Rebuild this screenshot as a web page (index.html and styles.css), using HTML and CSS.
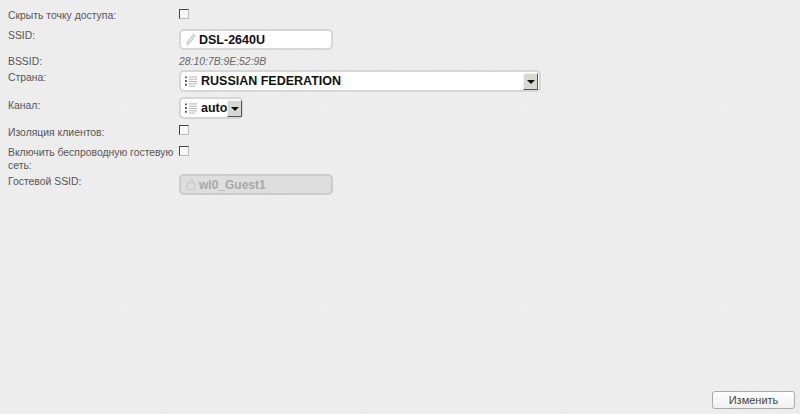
FILE: index.html
```html
<!DOCTYPE html>
<html lang="ru">
<head>
    <meta charset="UTF-8">
    <title>Wi-Fi</title>
    <link rel="stylesheet" href="styles.css">
</head>
<body>
    <form class="page">
        <div class="rows">
            <div class="row row-hide">
                <label class="row-label">Скрыть точку доступа:</label>
                <span class="check"></span>
            </div>
            <div class="row row-ssid">
                <label class="row-label">SSID:</label>
                <div class="field field-ssid">
                    <svg class="icon icon-small" viewBox="0 0 12 14"><path d="M8.500 1.500l2 1.500-6 8-3 1.500.6-3z" fill="#e4e4e4" stroke="#bcbcbc"/></svg>
                    <span class="field-text">DSL-2640U</span>
                </div>
            </div>
            <div class="row row-bssid">
                <label class="row-label">BSSID:</label>
                <span class="mac">28:10:7B:9E:52:9B</span>
            </div>
            <div class="row row-country">
                <label class="row-label">Страна:</label>
                <div class="field field-country">
                    <svg class="icon" viewBox="0 0 13 13"><path d="M0 2h2M0 6h2M0 10h2" stroke="#555" stroke-width="2"/><path d="M4 1.500h9M4 4h9M4 6.500h9M4 9h9M4 11.500h7" stroke="#b0b0b0"/></svg>
                    <span class="field-text">RUSSIAN FEDERATION</span>
                    <span class="arrow-btn"></span>
                </div>
            </div>
            <div class="row row-channel">
                <label class="row-label">Канал:</label>
                <div class="field field-channel">
                    <svg class="icon" viewBox="0 0 13 13"><path d="M0 2h2M0 6h2M0 10h2" stroke="#555" stroke-width="2"/><path d="M4 1.500h9M4 4h9M4 6.500h9M4 9h9M4 11.500h7" stroke="#b0b0b0"/></svg>
                    <span class="field-text">auto</span>
                    <span class="arrow-btn"></span>
                </div>
            </div>
            <div class="row row-isolate">
                <label class="row-label">Изоляция клиентов:</label>
                <span class="check"></span>
            </div>
            <div class="row row-guest">
                <label class="row-label">Включить беспроводную гостевую сеть:</label>
                <span class="check"></span>
            </div>
            <div class="row row-guest-ssid">
                <label class="row-label">Гостевой SSID:</label>
                <div class="field field-disabled">
                    <svg class="icon icon-small" viewBox="0 0 12 14"><path d="M2 5.500h8v7H2zM4 5V3l1-1h2l1 1v2" fill="none" stroke="#c4c4c4"/></svg>
                    <span class="field-text">wl0_Guest1</span>
                </div>
            </div>
        </div>
        <div class="actions">
            <button type="button" class="save-btn">Изменить</button>
        </div>
    </form>
</body>
</html>
```

FILE: styles.css
```css
/* Reset and page */
* {
    margin: 0;
    padding: 0;
    box-sizing: border-box;
}

body {
    height: 100vh;
    overflow: hidden;
    font-family: "Liberation Sans", Arial, sans-serif;
    font-size: 10.4px;
    color: #555;
    background-color: #ececec;
    background-image: url("data:image/svg+xml,%3Csvg xmlns='http://www.w3.org/2000/svg' width='200' height='200'%3E%3Cfilter id='n'%3E%3CfeTurbulence type='fractalNoise' baseFrequency='0.35' numOctaves='2'/%3E%3CfeColorMatrix values='0 0 0 0 1 0 0 0 0 1 0 0 0 0 1 0 0 0 0.5 -0.12'/%3E%3C/filter%3E%3Crect width='200' height='200' filter='url(%23n)' opacity='0.35'/%3E%3C/svg%3E");
}

.page {
    height: 100%;
    display: flex;
    flex-direction: column;
    justify-content: space-between;
    padding: 8px 5px 5px 8px;
}

/* Form rows */
.row {
    display: flex;
    align-items: flex-start;
}

.row-label {
    flex: 0 0 171px;
    line-height: 13px;
    padding-right: 4px;
}

.row-hide { height: 21px; padding-top: 1px; }
.row-ssid { height: 26px; }
.row-bssid { height: 15px; }
.row-country { height: 27px; }
.row-channel { height: 29px; }
.row-isolate { height: 20px; }
.row-guest { height: 28px; }

.row-country .row-label { margin-top: 1px; }
.row-channel .row-label { margin-top: 2px; }
.row-guest-ssid .row-label { margin-top: 1px; }

.check {
    width: 10px;
    height: 10px;
    background: #f7f7f7;
    border: 1px solid;
    border-color: #444 #bbb #bbb #444;
}

.row-isolate .check { margin-top: -1px; }

.mac {
    font-style: italic;
    color: #666;
    line-height: 13px;
}

/* Rounded fields */
.field {
    display: flex;
    align-items: center;
    height: 22px;
    padding-left: 4px;
    background: #fff;
    border: 2px solid #d6d6d6;
    border-radius: 5px;
}

.field-ssid, .field-disabled { width: 154px; height: 21px; }
.field-country { width: 362px; }
.field-channel { width: 64px; }

.field-disabled { background: #dedede; border-color: #cbcbcb; }

.icon {
    width: 12px;
    height: 13px;
    flex: none;
    margin-right: 4px;
}

.icon-small {
    margin-right: 2px;
}

.field-text {
    font-size: 12.5px;
    font-weight: bold;
    color: #111;
    white-space: nowrap;
}

.field-disabled .field-text { font-size: 12px; color: #a9a9a9; }

.arrow-btn {
    position: relative;
    width: 15px;
    height: 17px;
    flex: none;
    margin-left: auto;
    margin-right: 1px;
    background: #d8d8d2;
    border: 1px solid;
    border-color: #f4f4f4 #555 #555 #f4f4f4;
}

.field-channel .arrow-btn { margin-left: 0; margin-right: 0; }

.arrow-btn::after {
    content: "";
    position: absolute;
    left: 3px;
    top: 6px;
    border: 4px solid transparent;
    border-top-color: #111;
    border-bottom: 0;
}

/* Bottom button */
.actions {
    display: flex;
    justify-content: flex-end;
}

.save-btn {
    width: 83px;
    height: 18px;
    font: 11px "Liberation Sans", Arial, sans-serif;
    color: #444;
    background: linear-gradient(#fff, #f0f0f0);
    border: 1px solid #aaa;
    border-radius: 3px;
}
```
